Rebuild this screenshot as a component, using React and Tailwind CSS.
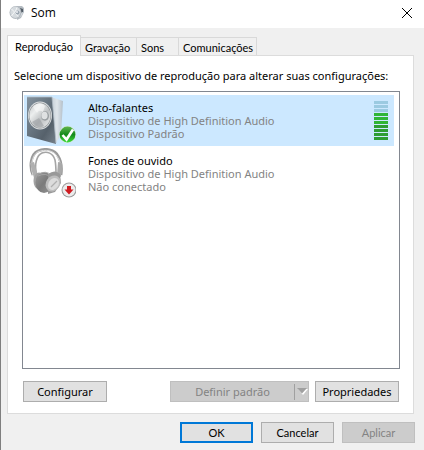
import { useState } from "react";
import clsx from "clsx";

const tabs = [
  { name: "Reprodução", width: "w-[74px]" },
  { name: "Gravação", width: "w-[56px]" },
  { name: "Sons", width: "w-[42px]" },
  { name: "Comunicações", width: "w-[78px]" },
];

const devices = [
  {
    name: "Alto-falantes",
    driver: "Dispositivo de High Definition Audio",
    status: "Dispositivo Padrão",
    icon: SpeakerIcon,
    level: 7,
  },
  {
    name: "Fones de ouvido",
    driver: "Dispositivo de High Definition Audio",
    status: "Não conectado",
    icon: HeadphonesIcon,
  },
];

function SoundIcon() {
  return (
    <svg viewBox="0 0 16 16" className="h-4 w-4" aria-hidden="true">
      <path d="M7 1h6l2 2v4l-3 6-4 2z" fill="#b4bbc1" />
      <path d="M11 3l3 1v3l-2 1z" fill="#525c66" />
      <path d="M12 8l2-1-1 3-3 3z" fill="#d9dfe4" />
      <ellipse cx="6.5" cy="7.5" rx="6" ry="6.5" fill="#b3bac0" />
      <ellipse cx="6.3" cy="7.3" rx="5" ry="5.7" fill="#d5dade" />
      <path d="M2.5 4l3 3-3 4M8 2.5l-2 5 3 4" stroke="#f5f7f8" fill="none" />
      <circle cx="8.5" cy="7.5" r="2" fill="#9aa5b0" />
      <circle cx="8" cy="7" r="1" fill="#eef1f4" />
    </svg>
  );
}

function SpeakerIcon() {
  return (
    <svg viewBox="0 0 52 51" className="h-[51px] w-[52px]" aria-hidden="true">
      <defs>
        <linearGradient id="front" x1="0" y1="0" x2="1" y2="1">
          <stop offset="0" stopColor="#84929e" />
          <stop offset="0.45" stopColor="#66737e" />
          <stop offset="0.7" stopColor="#56616b" />
          <stop offset="1" stopColor="#77828c" />
        </linearGradient>
        <linearGradient id="side" x1="0" y1="0" x2="1" y2="0">
          <stop offset="0" stopColor="#c3cdd5" />
          <stop offset="0.5" stopColor="#dfe5ea" />
          <stop offset="1" stopColor="#b4c0ca" />
        </linearGradient>
        <linearGradient id="cone" x1="0" y1="0" x2="1" y2="1">
          <stop offset="0" stopColor="#c3c6c8" />
          <stop offset="0.3" stopColor="#eceeee" />
          <stop offset="0.6" stopColor="#bcbfc1" />
          <stop offset="1" stopColor="#f1f2f2" />
        </linearGradient>
        <linearGradient id="check" x1="0" y1="0" x2="0" y2="1">
          <stop offset="0" stopColor="#5fb44c" />
          <stop offset="0.5" stopColor="#14891c" />
          <stop offset="1" stopColor="#3ddb3a" />
        </linearGradient>
      </defs>
      <path d="M27 2l12 4-2 34-6 9z" fill="url(#side)" />
      <path d="M3 2h25l4 47-29-8z" fill="url(#front)" />
      <path d="M3 2h25l4 46" fill="none" stroke="#aebac4" strokeWidth="0.8" />
      <ellipse cx="16" cy="20.5" rx="12" ry="14" fill="#dcdfe1" />
      <ellipse cx="16" cy="20.5" rx="11.2" ry="13" fill="#8b9093" />
      <ellipse cx="16" cy="20.5" rx="10.6" ry="12.3" fill="url(#cone)" />
      <path
        d="M9 12q6-7 12-1l-2 6q-4-3-6 1z"
        fill="#fafafa"
        opacity="0.6"
      />
      <path d="M8 27l7-4 5 8q-6 4-12-4z" fill="#9b9fa2" opacity="0.6" />
      <ellipse cx="21" cy="21" rx="4" ry="4.7" fill="#999ea1" />
      <ellipse cx="20.5" cy="20.5" rx="3.1" ry="3.8" fill="#dfe1e2" />
      <circle cx="43.5" cy="39.5" r="8.4" fill="#d3ead3" />
      <circle cx="43.5" cy="39.5" r="7.9" fill="url(#check)" />
      <path
        d="M38.5 40l4 4.5 6.5-10"
        fill="none"
        stroke="#fff"
        strokeWidth="2.6"
      />
    </svg>
  );
}

function HeadphonesIcon() {
  return (
    <svg viewBox="0 0 52 51" className="h-[51px] w-[52px]" aria-hidden="true">
      <defs>
        <linearGradient id="cup" x1="0" y1="0" x2="1" y2="1">
          <stop offset="0" stopColor="#9b9b9b" />
          <stop offset="0.5" stopColor="#7b7b7b" />
          <stop offset="1" stopColor="#959595" />
        </linearGradient>
      </defs>
      <path
        d="M9 27C5 18 7 6 14 3C21 0 31 1 34 8C38 14 38 20 37 27"
        fill="none"
        stroke="#9a9a9a"
        strokeWidth="2.8"
      />
      <path
        d="M9 27C6 18 8 7 14 3.8C21 1 30 2 33.5 9C37 14 37 20 36.5 27"
        fill="none"
        stroke="#dedede"
        strokeWidth="1"
      />
      <path
        d="M12.5 26C10 16 13 7 18 5C23 3 29 5 31 12C32 17 32 21 32 26"
        fill="none"
        stroke="#a5a5a5"
        strokeWidth="1.6"
      />
      <path d="M6 15l4-1 4 14-4 2z" fill="#b0b0b0" />
      <path d="M34 14l4 1-1 14-4-2z" fill="#a9a9a9" />
      <ellipse cx="15" cy="33" rx="5.5" ry="8.5" fill="#a3a3a3" />
      <ellipse cx="20" cy="34.5" rx="8.5" ry="10.5" fill="url(#cup)" />
      <path
        d="M14 28q8-4 14 2M15 26q7-4 12 1"
        stroke="#a9a9a9"
        strokeWidth="0.8"
        fill="none"
      />
      <path d="M24 26q7-5 12 0l1 9-6 9-7 2z" fill="#999" />
      <ellipse
        cx="29"
        cy="35.5"
        rx="7"
        ry="8.5"
        fill="#bdbdbd"
        transform="rotate(35 29 35.5)"
      />
      <ellipse
        cx="29.5"
        cy="36"
        rx="5"
        ry="6.4"
        fill="#dcdcdc"
        transform="rotate(35 29.5 36)"
      />
      <path d="M27 39l6-6" stroke="#b0b0b0" strokeWidth="1.2" />
      <circle cx="45" cy="42" r="7.5" fill="#9b9b9b" />
      <circle cx="45" cy="42" r="6.5" fill="#ececec" />
      <path d="M43 38h4v3.5h2.5L45 46.5l-4.500-5H43z" fill="#cf1b20" />
    </svg>
  );
}

function Meter({ level }) {
  return (
    <div
      role="meter"
      aria-label="Nível"
      aria-valuemin={0}
      aria-valuemax={10}
      aria-valuenow={level}
      className="mr-1.5 flex w-3.5 flex-col gap-px"
    >
      {Array.from({ length: 10 }, (_, i) => (
        <span
          key={i}
          className={clsx(
            "h-[3px]",
            i < 10 - level
              ? "bg-[#9bcae1]"
              : i < 6
                ? "bg-[#2fb536]"
                : "bg-[#2d9d33]"
          )}
        />
      ))}
    </div>
  );
}

function Button({ primary, className, children, ...props }) {
  return (
    <button
      type="button"
      className={clsx(
        "flex h-[21px] items-center justify-center bg-[#e1e1e1] disabled:border-[#bfbfbf] disabled:bg-[#cccccc] disabled:text-[#838383]",
        primary ? "border-2 border-[#0078d7]" : "border border-[#adadad]",
        className
      )}
      {...props}
    >
      {children}
    </button>
  );
}

export default function App() {
  const [tab, setTab] = useState("Reprodução");
  const [selected, setSelected] = useState("Alto-falantes");

  return (
    <div className="min-h-screen border-l border-[#7f7f7f] bg-[#f0f0f0] font-['Noto_Sans',sans-serif] text-[11px] leading-[13px] text-black">
      <header className="flex h-7 items-center bg-white pb-0.5 pl-2 pr-3">
        <SoundIcon />
        <h1 className="ml-1.5 font-['Open_Sans',sans-serif] text-xs">Som</h1>
        <button type="button" aria-label="Fechar" className="ml-auto">
          <svg viewBox="0 0 10 10" className="h-2.5 w-2.5">
            <path d="M0 0l10 10M10 0L0 10" stroke="#000" fill="none" />
          </svg>
        </button>
      </header>

      <main className="pl-1.5 pr-2.5 pt-[7px]">
        <div role="tablist" className="flex items-end font-['Lato',sans-serif]">
          {tabs.map(({ name, width }) => (
            <button
              key={name}
              type="button"
              role="tab"
              aria-selected={tab === name}
              onClick={() => setTab(name)}
              className={clsx(
                "border-r border-t border-[#d9d9d9] first:border-l",
                width,
                tab === name
                  ? "relative z-10 -mb-px h-[21px] bg-white"
                  : "h-[18px] pl-1 pt-px text-left"
              )}
            >
              {name}
            </button>
          ))}
        </div>

        <section className="border border-[#dcdcdc] bg-white pb-[11px] pl-3.5 pr-[13px] pt-[13px]">
          <p id="devices-label" className="-mx-2 whitespace-nowrap">
            Selecione um dispositivo de reprodução para alterar suas
            configurações:
          </p>
          <ul
            role="listbox"
            aria-labelledby="devices-label"
            className="mt-[9px] flex h-[278px] flex-col gap-0.5 border border-[#828790] py-[3px] pl-px pr-[5px]"
          >
            {devices.map(({ name, driver, status, icon: Icon, level }) => (
              <li
                key={name}
                role="option"
                aria-selected={selected === name}
                onClick={() => setSelected(name)}
                className={clsx(
                  "flex h-[51px] items-center",
                  selected === name && "bg-[#cce8ff]"
                )}
              >
                <Icon />
                <div className="ml-3 flex-1">
                  <div>{name}</div>
                  <div className="text-[#838383]">{driver}</div>
                  <div className="text-[#838383]">{status}</div>
                </div>
                {level && <Meter level={level} />}
              </li>
            ))}
          </ul>
          <div className="mt-3 flex gap-1.5 px-px">
            <Button className="mr-auto w-[84px]">Configurar</Button>
            <Button disabled className="w-[139px]">
              <span className="flex-1">Definir padrão</span>
              <span className="flex h-4 w-3.5 items-center border-l border-[#a0a0a0] pl-0.5">
                <svg viewBox="0 0 11 7" className="h-[7px] w-[11px]">
                  <path d="M1 1h10L6 7z" fill="#fff" />
                  <path d="M0 0h10L5 5.5z" fill="#a0a0a0" />
                </svg>
              </span>
            </Button>
            <Button className="w-[84px]">Propriedades</Button>
          </div>
        </section>
      </main>

      <footer className="flex justify-end gap-2 pr-[9px] pt-2 font-['Lato',sans-serif]">
        <Button primary className="w-[73px]">
          OK
        </Button>
        <Button className="w-[73px]">Cancelar</Button>
        <Button disabled className="w-[73px]">
          Aplicar
        </Button>
      </footer>
    </div>
  );
}
